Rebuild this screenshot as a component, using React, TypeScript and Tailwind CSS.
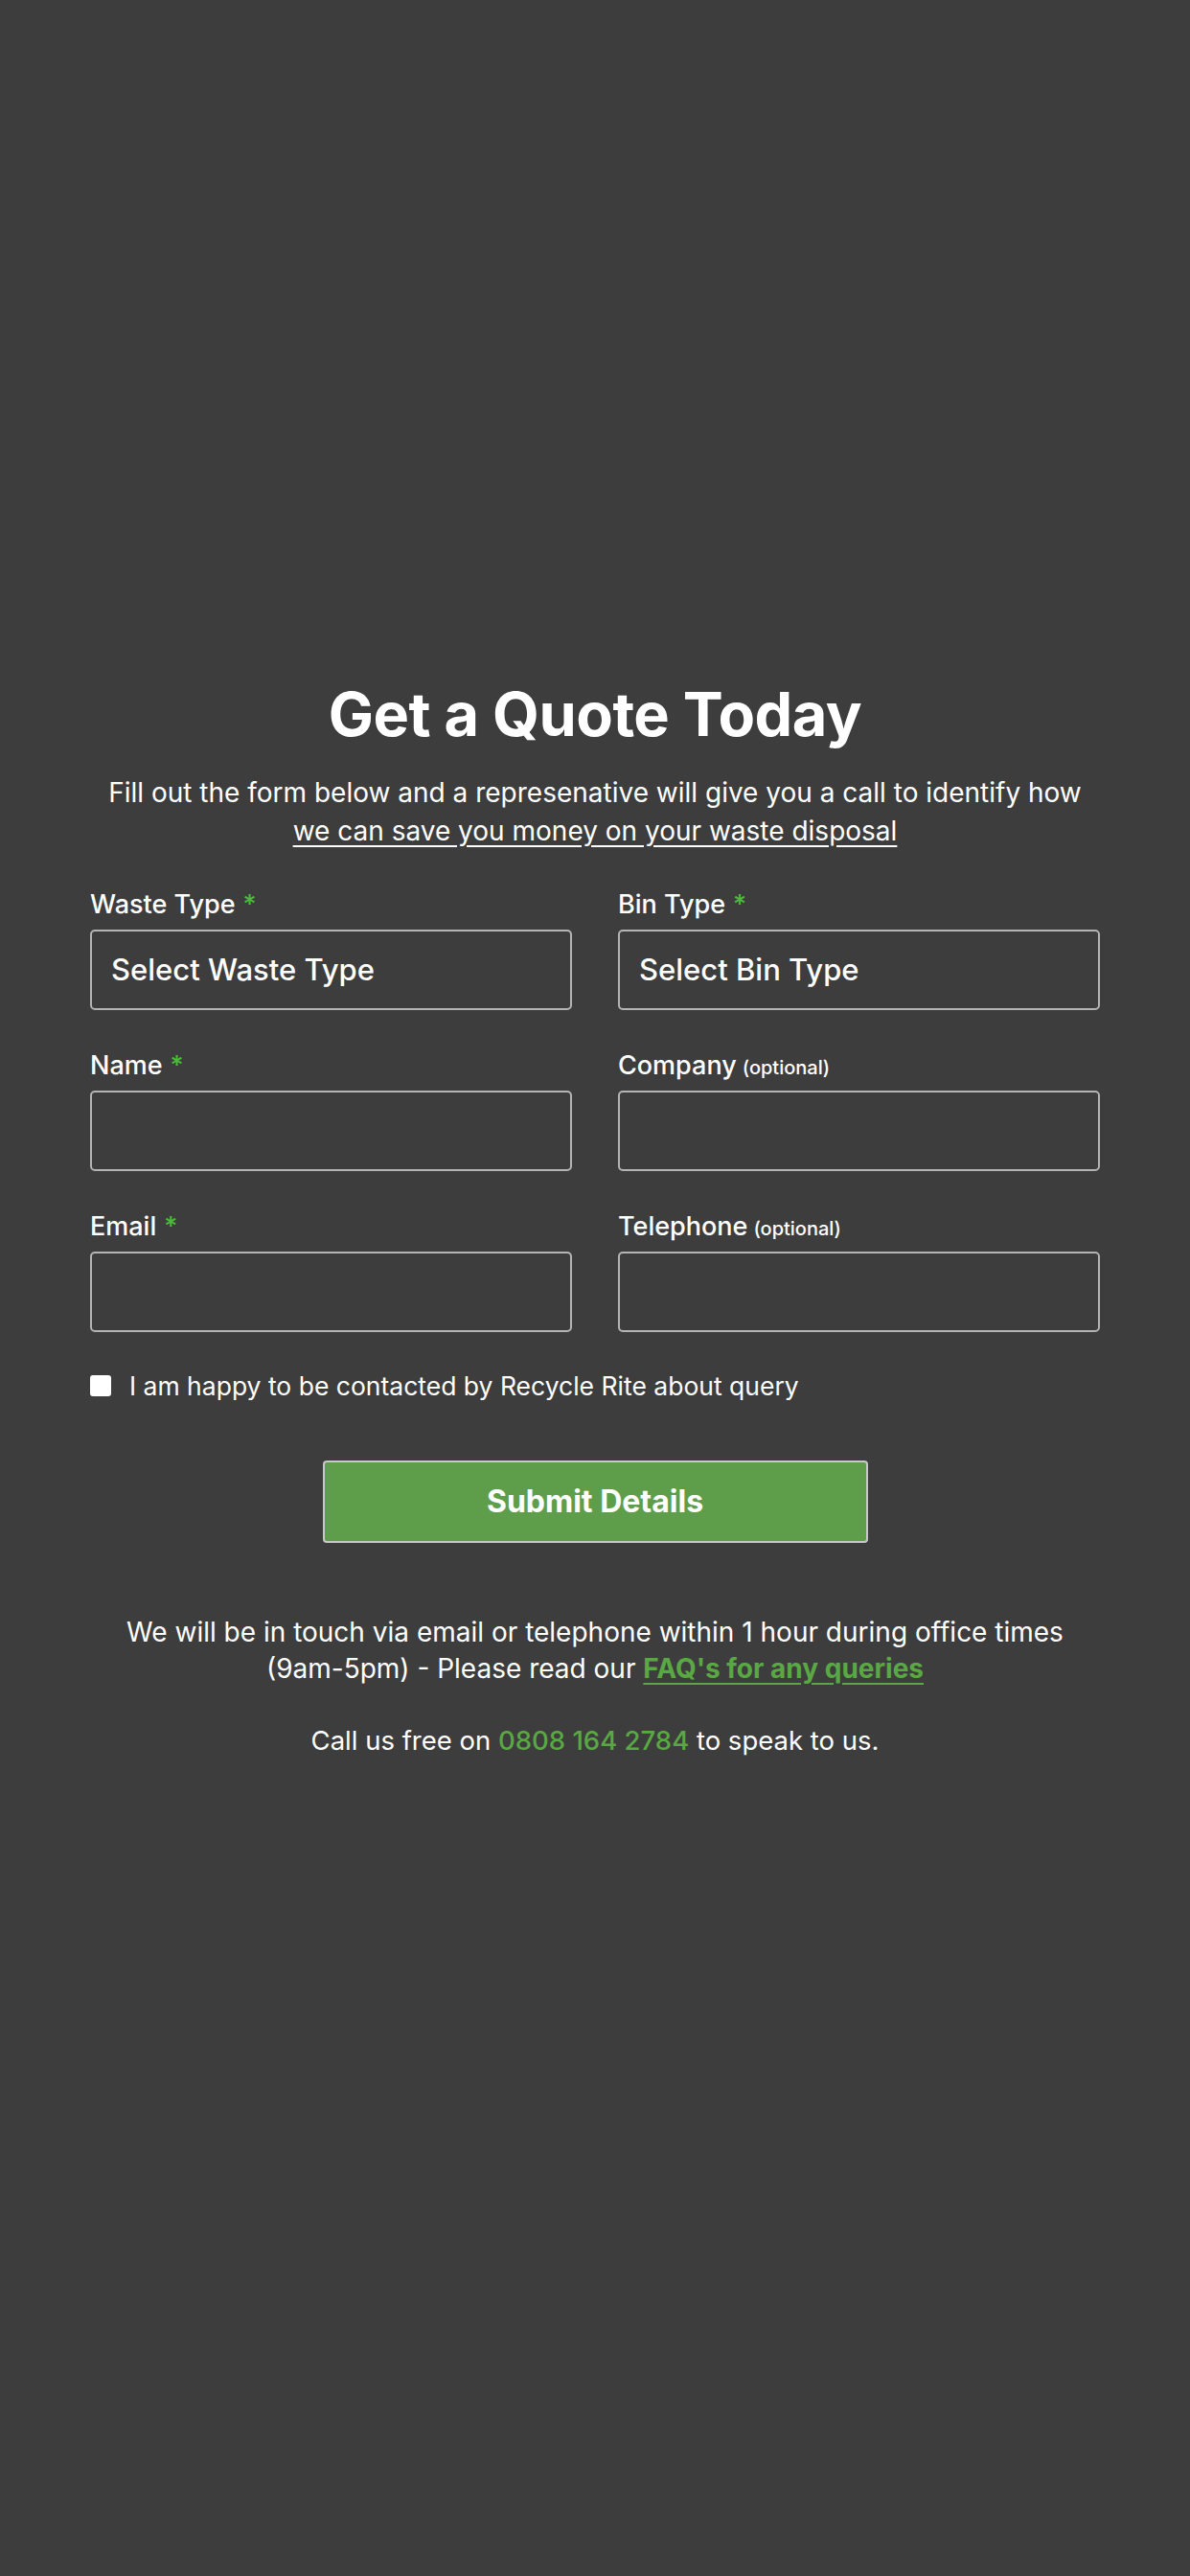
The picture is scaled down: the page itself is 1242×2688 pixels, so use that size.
import { useState } from "react";

const font = { fontFamily: "Inter, 'Noto Sans', sans-serif" };

const Label = ({ text, required, optional }: { text: string; required?: boolean; optional?: boolean }) => (
  <label className="block h-[36px] text-[27px] leading-[36px] font-medium text-white mb-[8px]">
    {text}
    {required && <span className="text-[#4cbb3c] ml-[8px]">*</span>}
    {optional && <span className="text-[20px] leading-none ml-[6px]">(optional)</span>}
  </label>
);

const Box = ({ placeholder }: { placeholder?: string }) => (
  <div className="h-[84px] rounded-[5px] border-2 border-[#b4b4b4] bg-[#3d3d3d] flex items-center px-[20px]">
    {placeholder && <span className="text-[31px] font-medium text-white">{placeholder}</span>}
  </div>
);

export default function App() {
  const [checked, setChecked] = useState(false);

  return (
    <div className="min-h-[2688px] w-full bg-[#3d3d3d] text-white" style={font}>
      <div className="pt-[707px] px-[94px]">
        <h1 className="text-center text-[63px] leading-[76px] font-bold tracking-[-0.5px]">Get a Quote Today</h1>
        <p className="mt-[24px] text-center text-[28px] leading-[40px]">
          Fill out the form below and a represenative will give you a call to identify how
          <br />
          <span className="underline underline-offset-[5px]">we can save you money on your waste disposal</span>
        </p>

        <div className="mt-[39px] grid grid-cols-2 gap-x-[48px] gap-y-[40px]">
          <div>
            <Label text="Waste Type" required />
            <Box placeholder="Select Waste Type" />
          </div>
          <div>
            <Label text="Bin Type" required />
            <Box placeholder="Select Bin Type" />
          </div>
          <div>
            <Label text="Name" required />
            <Box />
          </div>
          <div>
            <Label text="Company" optional />
            <Box />
          </div>
          <div>
            <Label text="Email" required />
            <Box />
          </div>
          <div>
            <Label text="Telephone" optional />
            <Box />
          </div>
        </div>

        <label className="mt-[38px] flex items-center gap-[19px] text-[26.5px] leading-[36px] cursor-pointer">
          <span
            onClick={() => setChecked(!checked)}
            className="w-[22px] h-[22px] rounded-[3px] bg-white flex items-center justify-center text-[#3d3d3d] text-[16px]"
          >
            {checked ? "✓" : ""}
          </span>
          I am happy to be contacted by Recycle Rite about query
        </label>

        <div className="mt-[60px] flex justify-center">
          <button className="w-[569px] h-[86px] rounded-[4px] border-2 border-[#c8c8c8] bg-[#5e9e4b] text-[32px] font-bold text-white">
            Submit Details
          </button>
        </div>

        <p className="mt-[74px] text-center text-[28px] leading-[38px]">
          We will be in touch via email or telephone within 1 hour during office times
          <br />
          (9am-5pm) - Please read our{" "}
          <span className="font-bold text-[#5aa844] underline underline-offset-[5px]">FAQ's for any queries</span>
        </p>
        <p className="mt-[37px] text-center text-[27.5px] leading-[38px]">
          Call us free on <span className="font-medium text-[#5aa844]">0808 164 2784</span> to speak to us.
        </p>
      </div>
    </div>
  );
}
